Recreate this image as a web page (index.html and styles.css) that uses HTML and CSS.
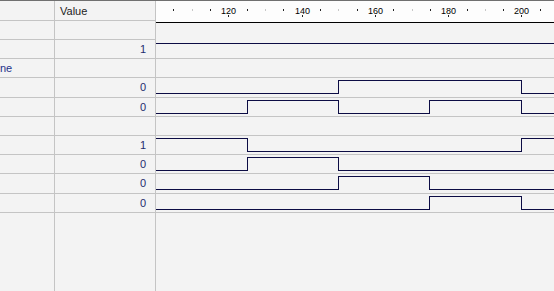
FILE: index.html
```html
<!DOCTYPE html>
<html>
<head>
    <title>Waveform</title>
    <link rel="stylesheet" href="styles.css">
</head>
<body>
    <div class="view">
        <div class="row head">
            <div class="cell name"><div class="cap"></div></div>
            <div class="cell"><div class="cap label">Value</div></div>
            <div class="ruler">
                <svg width="400" height="21">
                    <g class="dot">
                        <rect x="17" y="8" width="1" height="2"/>
                        <rect x="54" y="8" width="1" height="2"/>
                        <rect x="91" y="8" width="1" height="2"/>
                        <rect x="127" y="8" width="1" height="2"/>
                        <rect x="164" y="8" width="1" height="2"/>
                        <rect x="201" y="8" width="1" height="2"/>
                        <rect x="237" y="8" width="1" height="2"/>
                        <rect x="274" y="8" width="1" height="2"/>
                        <rect x="311" y="8" width="1" height="2"/>
                        <rect x="347" y="8" width="1" height="2"/>
                        <rect x="384" y="8" width="1" height="2"/>
                    </g>
                    <g class="dot faint">
                        <rect x="36" y="8" width="1" height="2"/>
                        <rect x="109" y="8" width="1" height="2"/>
                        <rect x="182" y="8" width="1" height="2"/>
                        <rect x="256" y="8" width="1" height="2"/>
                        <rect x="329" y="8" width="1" height="2"/>
                    </g>
                    <g class="dot">
                        <rect x="72" y="14" width="1" height="2"/>
                        <rect x="146" y="14" width="1" height="2"/>
                        <rect x="219" y="14" width="1" height="2"/>
                        <rect x="292" y="14" width="1" height="2"/>
                        <rect x="365" y="14" width="1" height="2"/>
                    </g>
                    <g class="mark">
                        <text x="72.5" y="13">120</text>
                        <text x="146.5" y="13">140</text>
                        <text x="219.5" y="13">160</text>
                        <text x="292.5" y="13">180</text>
                        <text x="365.5" y="13">200</text>
                    </g>
                </svg>
            </div>
        </div>

        <div class="row first">
            <div class="cell name"></div>
            <div class="cell value"></div>
            <div class="wave"></div>
        </div>
        <div class="row">
            <div class="cell name"></div>
            <div class="cell value">1</div>
            <div class="wave"><svg width="400" height="18"><path d="M0 3.5 H400"/></svg></div>
        </div>
        <div class="row">
            <div class="cell name"><span class="tail">ne</span></div>
            <div class="cell value"></div>
            <div class="wave"></div>
        </div>
        <div class="row">
            <div class="cell name"></div>
            <div class="cell value">0</div>
            <div class="wave"><svg width="400" height="18"><path d="M0 15.5 H182.5 V2.5 H365.5 V15.5 H400"/></svg></div>
        </div>
        <div class="row">
            <div class="cell name"></div>
            <div class="cell value">0</div>
            <div class="wave"><svg width="400" height="18"><path d="M0 15.5 H91.5 V2.5 H182.5 V15.5 H273.5 V2.5 H365.5 V15.5 H400"/></svg></div>
        </div>
        <div class="row">
            <div class="cell name"></div>
            <div class="cell value"></div>
            <div class="wave"></div>
        </div>
        <div class="row">
            <div class="cell name"></div>
            <div class="cell value">1</div>
            <div class="wave"><svg width="400" height="18"><path d="M0 2.5 H91.5 V15.5 H365.5 V2.5 H400"/></svg></div>
        </div>
        <div class="row">
            <div class="cell name"></div>
            <div class="cell value">0</div>
            <div class="wave"><svg width="400" height="18"><path d="M0 15.5 H91.5 V2.5 H182.5 V15.5 H400"/></svg></div>
        </div>
        <div class="row">
            <div class="cell name"></div>
            <div class="cell value">0</div>
            <div class="wave"><svg width="400" height="18"><path d="M0 15.5 H182.5 V2.5 H273.5 V15.5 H400"/></svg></div>
        </div>
        <div class="row">
            <div class="cell name"></div>
            <div class="cell value">0</div>
            <div class="wave"><svg width="400" height="18"><path d="M0 15.5 H273.5 V2.5 H365.5 V15.5 H400"/></svg></div>
        </div>

        <div class="row filler">
            <div class="cell name"></div>
            <div class="cell value"></div>
            <div class="wave"></div>
        </div>
    </div>
</body>
</html>
```
FILE: styles.css
```css
body {
    margin: 0;
    background: #f3f3f3;
    font-family: "Liberation Sans", Arial, sans-serif;
    font-size: 11px;
    overflow: hidden;
}
.view {
    height: 291px;
    display: flex;
    flex-direction: column;
    border-top: 1px solid #707070;
    box-sizing: border-box;
}
.row {
    display: grid;
    grid-template-columns: 55px 101px 1fr;
    height: 19.2px;
    flex: none;
}
.cell {
    box-sizing: border-box;
    border-right: 1px solid #c4c4c4;
    border-bottom: 1px solid #c4c4c4;
    overflow: hidden;
    white-space: nowrap;
    display: flex;
    align-items: center;
}
.value {
    justify-content: flex-end;
    padding-right: 9px;
    color: #1f2c6e;
}
.tail {
    color: #24328a;
}
.wave {
    box-sizing: border-box;
    border-bottom: 1px solid #c4c4c4;
    overflow: hidden;
}
.wave svg {
    display: block;
}
.wave path {
    fill: none;
    stroke: #0c0c44;
    stroke-width: 1;
    shape-rendering: crispEdges;
}

/* header + ruler */
.head {
    height: 22px;
}
.head .cell {
    border-bottom: none;
    align-items: flex-start;
}
.cap {
    box-sizing: border-box;
    width: 100%;
    height: 20px;
    border-bottom: 1px solid #c4c4c4;
    display: flex;
    align-items: center;
}
.label {
    padding-left: 5px;
    color: #222;
}
.ruler {
    box-sizing: border-box;
    background: #fdfdfd;
    border-bottom: 1px solid #000;
    overflow: hidden;
}
.ruler svg {
    display: block;
}
.dot {
    fill: #222;
}
.faint {
    fill: #c8c8c8;
}
.mark text {
    font-family: "Liberation Sans", Arial, sans-serif;
    font-size: 9px;
    fill: #000;
    text-anchor: middle;
}

.first {
    height: 17px;
}
.first .wave {
    border-bottom: none;
}
.filler {
    flex: 1;
    height: auto;
}
.filler .cell, .filler .wave {
    border-bottom: none;
}
```
